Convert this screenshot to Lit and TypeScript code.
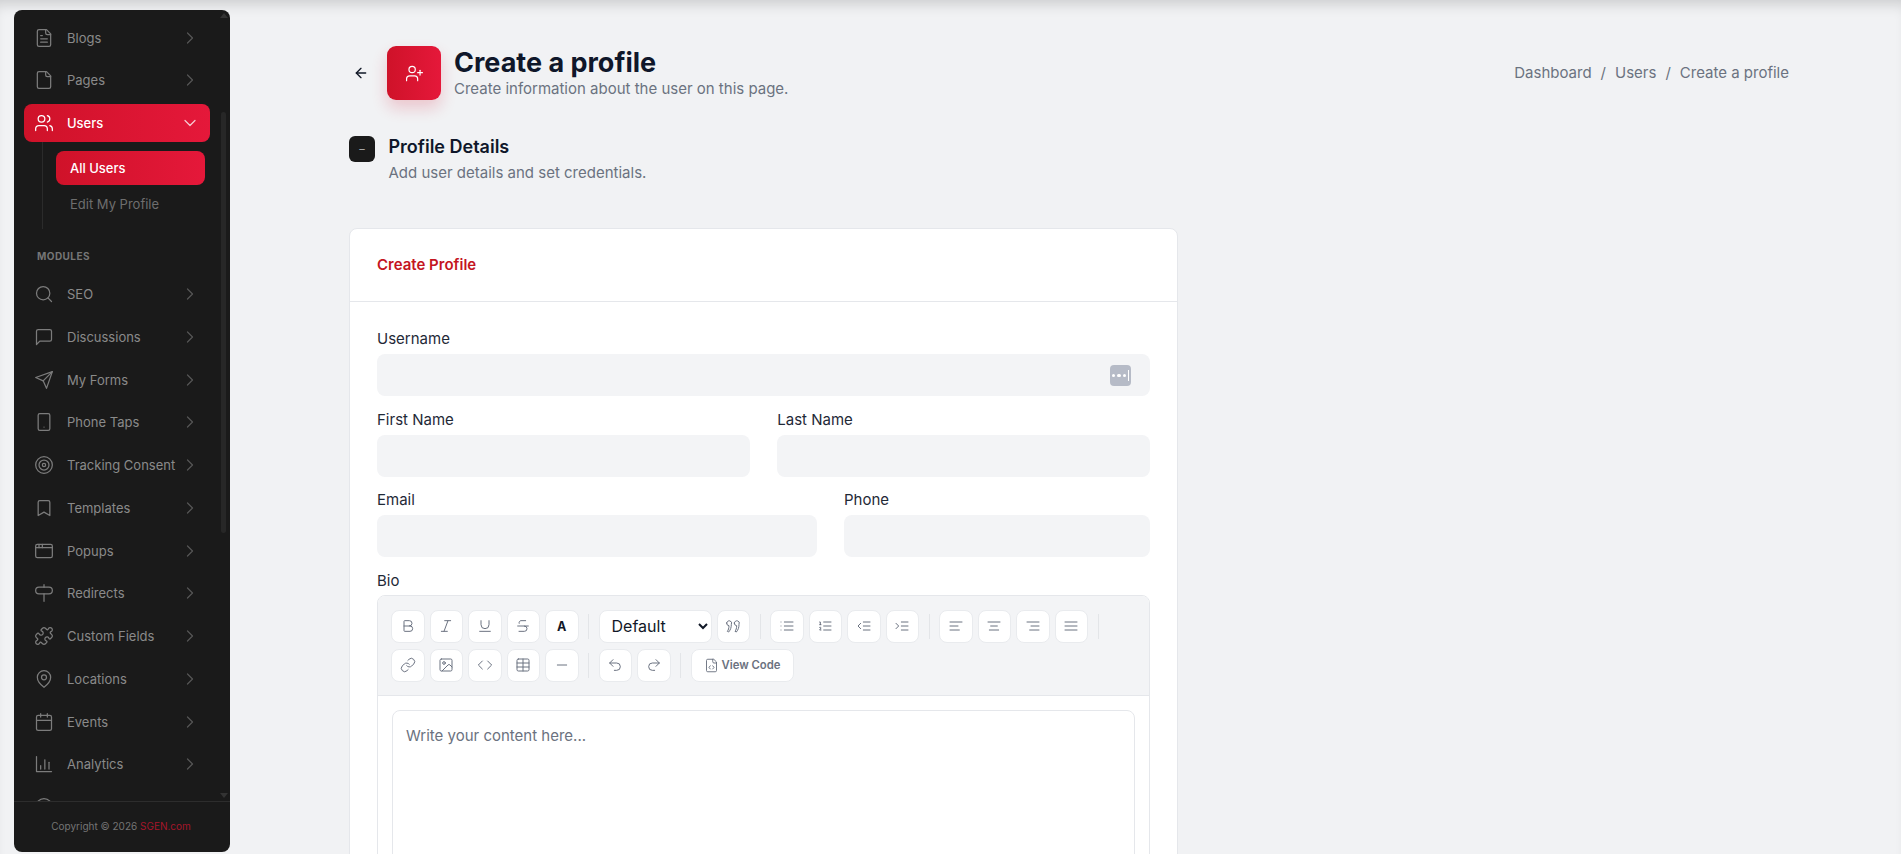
import { LitElement, html, css, svg } from "lit";
import { customElement } from "lit/decorators.js";

const FILE = "M15 2H6a2 2 0 0 0-2 2v16a2 2 0 0 0 2 2h12a2 2 0 0 0 2-2V7Z";
const FOLD = "M14 2v4a2 2 0 0 0 2 2h4";

const ICONS: Record<string, unknown> = {
  blogs: svg`<path d=${FILE}/><path d=${FOLD}/><path d="M10 9H8"/><path d="M16 13H8"/><path d="M16 17H8"/>`,
  pages: svg`<path d=${FILE}/><path d=${FOLD}/>`,
  users: svg`<path d="M16 21v-2a4 4 0 0 0-4-4H6a4 4 0 0 0-4 4v2"/><circle cx="9" cy="7" r="4"/><path d="M22 21v-2a4 4 0 0 0-3-3.87"/><path d="M16 3.13a4 4 0 0 1 0 7.75"/>`,
  search: svg`<circle cx="11" cy="11" r="8"/><path d="m21 21-4.3-4.3"/>`,
  message: svg`<path d="M21 15a2 2 0 0 1-2 2H7l-4 4V5a2 2 0 0 1 2-2h14a2 2 0 0 1 2 2z"/>`,
  send: svg`<path d="m22 2-7 20-4-9-9-4Z"/><path d="M22 2 11 13"/>`,
  phone: svg`<rect x="5" y="2" width="14" height="20" rx="2"/><path d="M12 18h.01"/>`,
  target: svg`<circle cx="12" cy="12" r="10"/><circle cx="12" cy="12" r="6"/><circle cx="12" cy="12" r="2"/>`,
  bookmark: svg`<path d="m19 21-7-4-7 4V5a2 2 0 0 1 2-2h10a2 2 0 0 1 2 2v16z"/>`,
  window: svg`<rect x="2" y="4" width="20" height="16" rx="2"/><path d="M10 4v4"/><path d="M2 8h20"/><path d="M6 4v4"/>`,
  sign: svg`<path d="M6 5h12a4 4 0 0 1 0 8H6a4 4 0 0 1 0-8Z"/><path d="M12 2v3"/><path d="M12 13v9"/>`,
  puzzle: svg`<path d="M19.439 7.85c-.049.322.059.648.289.878l1.568 1.568c.47.47.706 1.087.706 1.704s-.235 1.233-.706 1.704l-1.611 1.611a.98.98 0 0 1-.837.276c-.47-.07-.802-.48-.968-.925a2.501 2.501 0 1 0-3.214 3.214c.446.166.855.497.925.968a.979.979 0 0 1-.276.837l-1.61 1.61a2.404 2.404 0 0 1-1.705.707 2.402 2.402 0 0 1-1.704-.706l-1.568-1.568a1.026 1.026 0 0 0-.877-.29c-.493.074-.84.504-1.02.968a2.5 2.5 0 1 1-3.237-3.237c.464-.18.894-.527.967-1.02a1.026 1.026 0 0 0-.289-.877l-1.568-1.568A2.402 2.402 0 0 1 1.998 12c0-.617.236-1.234.706-1.704L4.23 8.77c.24-.24.581-.353.917-.303.515.077.877.528 1.073 1.01a2.5 2.5 0 1 0 3.259-3.259c-.482-.196-.933-.558-1.01-1.073-.05-.336.062-.676.303-.917l1.525-1.525A2.402 2.402 0 0 1 12 1.998c.617 0 1.234.236 1.704.706l1.568 1.568c.23.23.556.338.877.29.493-.074.84-.504 1.02-.968a2.5 2.5 0 1 1 3.237 3.237c-.464.18-.894.527-.967 1.02Z"/>`,
  pin: svg`<path d="M20 10c0 6-8 12-8 12s-8-6-8-12a8 8 0 0 1 16 0Z"/><circle cx="12" cy="10" r="3"/>`,
  calendar: svg`<path d="M8 2v4"/><path d="M16 2v4"/><rect x="3" y="4" width="18" height="18" rx="2"/><path d="M3 10h18"/>`,
  chart: svg`<path d="M3 3v18h18"/><path d="M8 18v-4"/><path d="M13 18V7"/><path d="M18 18v-8"/>`,
  circle: svg`<circle cx="12" cy="12" r="10"/>`,
  chevR: svg`<path d="m9 18 6-6-6-6"/>`,
  chevD: svg`<path d="m6 9 6 6 6-6"/>`,
  back: svg`<path d="m12 19-7-7 7-7"/><path d="M19 12H5"/>`,
  userPlus: svg`<path d="M16 21v-2a4 4 0 0 0-4-4H6a4 4 0 0 0-4 4v2"/><circle cx="9" cy="7" r="4"/><path d="M19 8v6"/><path d="M22 11h-6"/>`,
  bold: svg`<path d="M6 12h9a4 4 0 0 1 0 8H7a1 1 0 0 1-1-1V5a1 1 0 0 1 1-1h7a4 4 0 0 1 0 8"/>`,
  italic: svg`<path d="M19 4h-9"/><path d="M14 20H5"/><path d="M15 4 9 20"/>`,
  underline: svg`<path d="M6 4v6a6 6 0 0 0 12 0V4"/><path d="M4 20h16"/>`,
  strike: svg`<path d="M16 4H9a3 3 0 0 0-2.83 4"/><path d="M14 12a4 4 0 0 1 0 8H6"/><path d="M4 12h16"/>`,
  quote: svg`<path transform="translate(-1.5 0)" d="M4 7.5a3.7 3.7 0 1 1 7 2c0 4.500-1 8-4 11.500l-2-1c1.500-2 2.500-4.500 2.500-8.500A3.700 3.700 0 0 1 4 7.500Z"/><path transform="translate(1 0)" d="M13 7.500a3.700 3.700 0 1 1 7 2c0 4.500-1 8-4 11.500l-2-1c1.500-2 2.500-4.500 2.500-8.500A3.700 3.700 0 0 1 13 7.500Z"/>`,
  list: svg`<path d="M3 6h.01"/><path d="M3 12h.01"/><path d="M3 18h.01"/><path d="M8 6h13"/><path d="M8 12h13"/><path d="M8 18h13"/>`,
  ordered: svg`<path d="M10 6h11"/><path d="M10 12h11"/><path d="M10 18h11"/><path d="M4 6h1v4"/><path d="M4 10h2"/><path d="M6 18H4c0-1 2-2 2-3s-1-1.500-2-1"/>`,
  outdent: svg`<path d="M7 8l-4 4 4 4"/><path d="M21 12H11"/><path d="M21 6H11"/><path d="M21 18H11"/>`,
  indent: svg`<path d="m3 8 4 4-4 4"/><path d="M21 12H11"/><path d="M21 6H11"/><path d="M21 18H11"/>`,
  alignL: svg`<path d="M21 6H3"/><path d="M15 12H3"/><path d="M17 18H3"/>`,
  alignC: svg`<path d="M21 6H3"/><path d="M17 12H7"/><path d="M19 18H5"/>`,
  alignR: svg`<path d="M21 6H3"/><path d="M21 12H9"/><path d="M21 18H7"/>`,
  alignJ: svg`<path d="M3 6h18"/><path d="M3 12h18"/><path d="M3 18h18"/>`,
  link: svg`<path d="M10 13a5 5 0 0 0 7.54.54l3-3a5 5 0 0 0-7.07-7.07l-1.72 1.71"/><path d="M14 11a5 5 0 0 0-7.54-.54l-3 3a5 5 0 0 0 7.07 7.07l1.71-1.71"/>`,
  image: svg`<rect x="3" y="3" width="18" height="18" rx="2"/><circle cx="9" cy="9" r="2"/><path d="m21 15-3.086-3.086a2 2 0 0 0-2.828 0L6 21"/>`,
  code: svg`<path d="m16 18 6-6-6-6"/><path d="m8 6-6 6 6 6"/>`,
  table: svg`<rect x="3" y="3" width="18" height="18" rx="2"/><path d="M3 9h18"/><path d="M3 15h18"/><path d="M12 3v18"/>`,
  minus: svg`<path d="M5 12h14"/>`,
  undo: svg`<path d="M9 14 4 9l5-5"/><path d="M4 9h10.5a5.5 5.5 0 0 1 0 11H11"/>`,
  redo: svg`<path d="m15 14 5-5-5-5"/><path d="M20 9H9.5a5.5 5.5 0 0 0 0 11H13"/>`,
  fileCode: svg`<path d=${FILE}/><path d=${FOLD}/><path d="M10 12.5 8 15l2 2.5"/><path d="m14 12.5 2 2.5-2 2.5"/>`,
};

const icon = (name: string, cls = "") =>
  html`<svg class="ic ${cls}" viewBox="0 0 24 24" fill="none" stroke="currentColor" stroke-linecap="round" stroke-linejoin="round">${ICONS[name]}</svg>`;

const TOP_NAV: [string, string][] = [["blogs", "Blogs"], ["pages", "Pages"]];
const MODULE_NAV: [string, string][] = [
  ["search", "SEO"], ["message", "Discussions"], ["send", "My Forms"], ["phone", "Phone Taps"],
  ["target", "Tracking Consent"], ["bookmark", "Templates"], ["window", "Popups"], ["sign", "Redirects"],
  ["puzzle", "Custom Fields"], ["pin", "Locations"], ["calendar", "Events"], ["chart", "Analytics"],
];

const ROW1 = ["bold", "italic", "underline", "strike", "A", "|", "select", "quote", "|", "list", "ordered", "outdent", "indent", "|", "alignL", "alignC", "alignR", "alignJ", "|"];
const ROW2 = ["link", "image", "code", "table", "minus", "|", "undo", "redo", "|", "view"];

@customElement("app-root")
export class AppRoot extends LitElement {
  static styles = css`
    :host {
      display: flex;
      height: 100vh;
      overflow: hidden;
      background: #f1f2f4;
      box-shadow: inset 0 12px 14px -8px rgba(0, 0, 0, 0.16);
      font-family: Inter, "Noto Sans", sans-serif;
      color: #111827;
    }
    .ic { width: 20px; height: 20px; stroke-width: 1.5; flex: none; display: block; }

    .sidebar {
      position: relative;
      flex: none;
      width: 216px;
      margin: 10px 0 2px 14px;
      background: #1a1a1a;
      border-radius: 8px;
      display: flex;
      flex-direction: column;
      overflow: hidden;
    }
    .nav { flex: 1; min-height: 0; overflow: hidden; padding: 8.5px 20px 0 10px; }
    .item {
      display: flex;
      align-items: center;
      height: 38px;
      margin-bottom: 4.75px;
      padding: 0 11px 0 10px;
      gap: 13px;
      border-radius: 8px;
      font-size: 13px;
      color: #8a8a8a;
    }
    .item .ic { color: #7c7c7c; }
    .item .lbl { flex: 1; min-width: 0; white-space: nowrap; }
    .item .chev { color: #555; width: 20px; height: 20px; margin-right: -1px; }
    .item.active {
      background: linear-gradient(90deg, #cf1229, #e5183a);
      color: #fff;
      font-weight: 500;
      margin-bottom: 0;
    }
    .item.active .ic { color: #fff; }
    .item.active .chev { color: #f6c9d0; }

    .sub {
      margin: 0 5px 0 18px;
      padding: 9px 0 8px 13px;
      border-left: 1px solid #2b2b2b;
      display: flex;
      flex-direction: column;
      gap: 2px;
    }
    .sub-item {
      height: 34px;
      display: flex;
      align-items: center;
      padding: 0 14px;
      border-radius: 8px;
      font-size: 13px;
      color: #6e6e6e;
    }
    .sub-item.active {
      background: linear-gradient(90deg, #cf1229, #e5183a);
      color: #fff;
      font-weight: 500;
    }
    .section-label {
      box-sizing: border-box;
      padding: 8px 0 0 13px;
      height: 46px;
      display: flex;
      align-items: center;
      font-size: 10px;
      font-weight: 700;
      letter-spacing: 0.45px;
      color: #767676;
    }
    .foot {
      box-sizing: border-box;
      flex: none;
      height: 51px;
      padding: 0 2px 2px 0;
      border-top: 1px solid #2d2d2d;
      display: flex;
      align-items: center;
      justify-content: center;
      font-size: 10px;
      color: #757575;
      white-space: pre;
    }
    .foot span { color: #a5162b; }
    .thumb { position: absolute; left: 207px; top: 102px; width: 5px; height: 421px; border-radius: 3px; background: #272727; }
    .arrow { position: absolute; left: 206px; width: 0; height: 0; border-left: 4px solid transparent; border-right: 4px solid transparent; }
    .arrow.up { top: 3px; border-bottom: 5px solid #333; }
    .arrow.down { top: 783px; border-top: 5px solid #333; }

    .main { flex: 1; min-width: 0; padding: 46px 0 0 119px; }
    .wrap { width: 1440px; }
    .head { display: flex; align-items: center; justify-content: space-between; }
    .head-left { display: flex; align-items: center; }
    .back { width: 24px; display: flex; justify-content: center; margin-right: 14px; color: #111827; }
    .back .ic { width: 16px; height: 16px; stroke-width: 2; }
    .badge {
      width: 54px; height: 54px; border-radius: 9px; margin-right: 13px;
      background: linear-gradient(90deg, #cf1229, #e5183a);
      box-shadow: 0 8px 16px rgba(215, 20, 50, 0.2);
      display: flex; align-items: center; justify-content: center; color: #fff;
    }
    .badge .ic { width: 19px; height: 19px; }
    h1 { margin: -1px 0 0; font-size: 27px; line-height: 34px; font-weight: 700; color: #0f172a; }
    .head-sub { font-size: 15px; line-height: 20px; color: #6b7280; margin-top: -1px; }
    .crumbs { display: flex; gap: 9px; font-size: 15px; color: #6b7280; margin-top: -2px; }

    .section { display: flex; gap: 13.5px; margin-top: 36px; }
    .sec-ic {
      width: 26px; height: 26px; border-radius: 6px; background: #1a1a1a; color: #aaa;
      display: flex; align-items: center; justify-content: center; font-size: 11px; flex: none;
    }
    h2 { margin: 0; font-size: 18px; line-height: 22px; font-weight: 600; color: #0f172a; }
    .sec-sub { font-size: 15px; line-height: 20px; color: #6b7280; margin-top: 5px; }

    .card {
      width: 829px;
      margin-top: 45px;
      background: #fff;
      border: 1px solid #e5e7eb;
      border-radius: 8px;
      box-sizing: border-box;
    }
    .card-head {
      box-sizing: border-box;
      height: 73px;
      padding: 0 27px 2px;
      display: flex;
      align-items: center;
      border-bottom: 1px solid #e5e7eb;
      font-size: 15px;
      font-weight: 600;
      color: #c4151f;
    }
    .card-body { padding: 27px 27px 0; display: flex; flex-direction: column; gap: 13.5px; }
    .grid { display: grid; gap: 27.5px; }
    .grid.even { grid-template-columns: 1fr 1fr; }
    .grid.wide { grid-template-columns: 440px 1fr; gap: 27px; }
    label { display: block; font-size: 15px; line-height: 20px; margin-bottom: 5px; color: #1f2937; }
    label.tight { margin-bottom: 4px; }
    .input-wrap { position: relative; }
    input {
      display: block; width: 100%; height: 42px; box-sizing: border-box;
      border: 0; border-radius: 8px; background: #f3f4f6; padding: 0 14px; font: inherit; outline: none;
    }
    .key {
      position: absolute; right: 19px; top: 11px; width: 21px; height: 21px; border-radius: 4px; background: #b6bbc7;
      display: flex; align-items: center; justify-content: flex-end; gap: 2px; padding-right: 2px; box-sizing: border-box;
    }
    .key i { width: 3.5px; height: 3.5px; border-radius: 50%; background: #fff; }
    .key b { width: 1px; height: 11px; background: #fff; }

    .editor { border: 1px solid #e5e7eb; border-radius: 8px 8px 0 0; overflow: hidden; }
    .toolbar {
      background: #f3f4f6;
      border-bottom: 1px solid #e5e7eb;
      padding: 14px 13px 13px;
      display: flex;
      flex-wrap: wrap;
      gap: 5.5px 5px;
      align-items: center;
    }
    .tb {
      width: 33.5px; height: 33.5px; box-sizing: border-box; background: #fff; border: 1px solid #e9ebee; border-radius: 8px;
      display: flex; align-items: center; justify-content: center; color: #6b7280; padding: 0;
      font-family: inherit;
    }
    .tb .ic { width: 16px; height: 16px; }
    .tb.letter { font-size: 12.5px; font-weight: 700; color: #111827; }
    .tb.view { width: 103px; gap: 3px; font-size: 11.3px; font-weight: 600; color: #6b7280; }
    .tb.view .ic { width: 15px; height: 15px; }
    select {
      width: 113px; height: 33.5px; box-sizing: border-box; background: #fff; border: 1px solid #e9ebee; border-radius: 8px;
      font: 16px Inter, sans-serif; color: #111827; padding: 0 8px; outline: none;
    }
    .sep { width: 1px; height: 25px; background: #e3e5e8; margin: 0 4.5px; }
    .body { padding: 14px 14px 0; background: #fff; }
    .content {
      height: 400px; border: 1px solid #e5e7eb; border-radius: 8px 8px 0 0; padding: 15px 13px;
      box-sizing: border-box; font-size: 15px; line-height: 20px; color: #6b7280;
    }
  `;

  private navItem([ic, label]: [string, string]) {
    return html`<div class="item">${icon(ic)}<span class="lbl">${label}</span>${icon("chevR", "chev")}</div>`;
  }

  private tool(name: string) {
    if (name === "|") return html`<span class="sep"></span>`;
    if (name === "A") return html`<button class="tb letter">A</button>`;
    if (name === "select") return html`<select><option>Default</option></select>`;
    if (name === "view") return html`<button class="tb view">${icon("fileCode")}View Code</button>`;
    return html`<button class="tb">${icon(name)}</button>`;
  }

  render() {
    return html`
      <aside class="sidebar">
        <nav class="nav">
          ${TOP_NAV.map((n) => this.navItem(n))}
          <div class="item active">${icon("users")}<span class="lbl">Users</span>${icon("chevD", "chev")}</div>
          <div class="sub">
            <div class="sub-item active">All Users</div>
            <div class="sub-item">Edit My Profile</div>
          </div>
          <div class="section-label">MODULES</div>
          ${MODULE_NAV.map((n) => this.navItem(n))}
          <div class="item">${icon("circle")}</div>
        </nav>
        <div class="foot">Copyright © 2026 <span>SGEN.com</span></div>
        <div class="arrow up"></div>
        <div class="thumb"></div>
        <div class="arrow down"></div>
      </aside>
      <main class="main">
        <div class="wrap">
          <header class="head">
            <div class="head-left">
              <div class="back">${icon("back")}</div>
              <div class="badge">${icon("userPlus")}</div>
              <div>
                <h1>Create a profile</h1>
                <div class="head-sub">Create information about the user on this page.</div>
              </div>
            </div>
            <div class="crumbs"><span>Dashboard</span><span>/</span><span>Users</span><span>/</span><span>Create a profile</span></div>
          </header>
          <section class="section">
            <div class="sec-ic">–</div>
            <div>
              <h2>Profile Details</h2>
              <div class="sec-sub">Add user details and set credentials.</div>
            </div>
          </section>
          <div class="card">
            <div class="card-head">Create Profile</div>
            <div class="card-body">
              <div>
                <label>Username</label>
                <div class="input-wrap"><input /><div class="key"><i></i><i></i><i></i><b></b></div></div>
              </div>
              <div class="grid even">
                <div><label>First Name</label><input /></div>
                <div><label>Last Name</label><input /></div>
              </div>
              <div class="grid wide">
                <div><label>Email</label><input /></div>
                <div><label>Phone</label><input /></div>
              </div>
              <div>
                <label class="tight">Bio</label>
                <div class="editor">
                  <div class="toolbar">
                    ${ROW1.map((t) => this.tool(t))}
                    ${ROW2.map((t) => this.tool(t))}
                  </div>
                  <div class="body"><div class="content">Write your content here...</div></div>
                </div>
              </div>
            </div>
          </div>
        </div>
      </main>
    `;
  }
}
